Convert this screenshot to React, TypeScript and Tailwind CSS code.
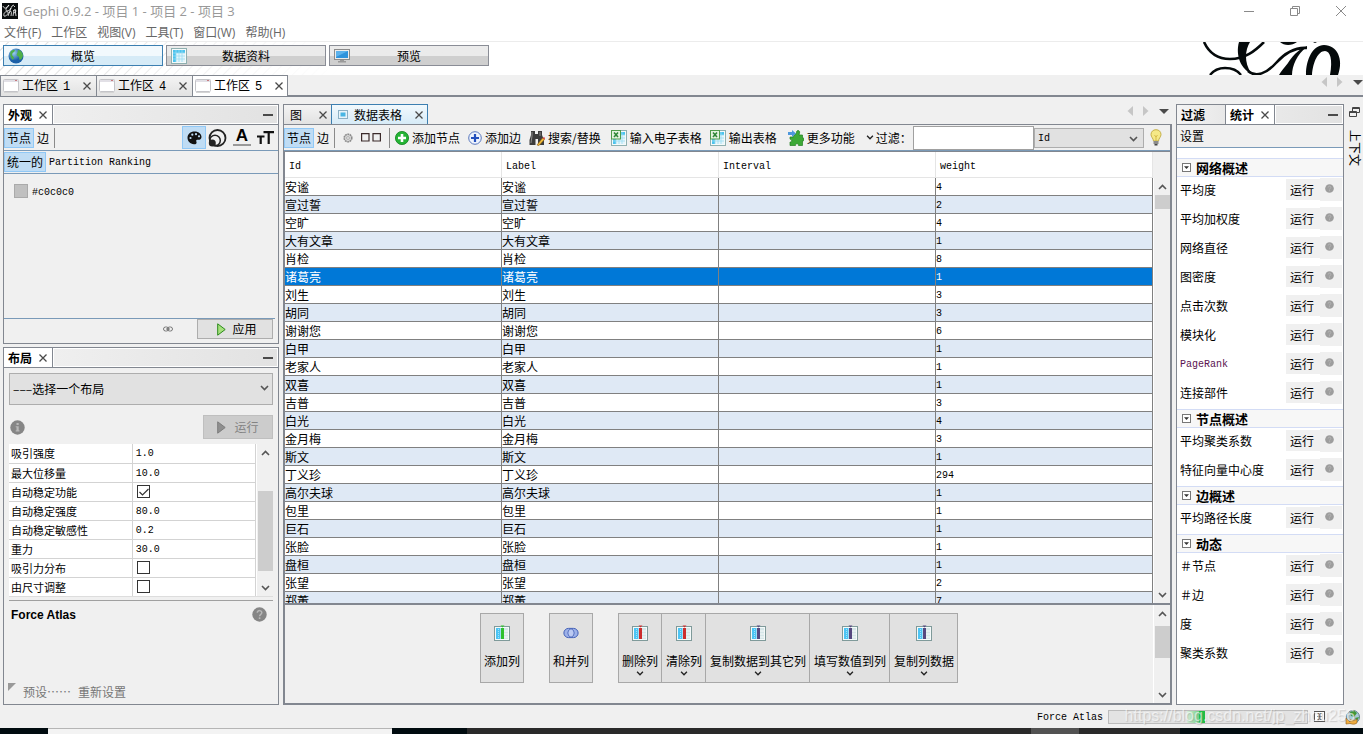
import React from 'react';

type Kids = { children?: React.ReactNode };

const nodes: [string, string][] = [
  ['安谧', '4'], ['宣过誓', '2'], ['空旷', '4'], ['大有文章', '1'], ['肖检', '8'], ['诸葛亮', '1'],
  ['刘生', '3'], ['胡同', '3'], ['谢谢您', '6'], ['白甲', '1'], ['老家人', '1'], ['双喜', '1'],
  ['吉普', '3'], ['白光', '4'], ['金月梅', '3'], ['斯文', '1'], ['丁义珍', '294'], ['高尔夫球', '1'],
  ['包里', '1'], ['巨石', '1'], ['张脸', '1'], ['盘桓', '1'], ['张望', '2'], ['郑董', '7'],
];

const properties: { name: string; value: string | boolean }[] = [
  { name: '吸引强度', value: '1.0' },
  { name: '最大位移量', value: '10.0' },
  { name: '自动稳定功能', value: true },
  { name: '自动稳定强度', value: '80.0' },
  { name: '自动稳定敏感性', value: '0.2' },
  { name: '重力', value: '30.0' },
  { name: '吸引力分布', value: false },
  { name: '由尺寸调整', value: false },
];

const statistics: { title: string; items: string[] }[] = [
  { title: '网络概述', items: ['平均度', '平均加权度', '网络直径', '图密度', '点击次数', '模块化', 'PageRank', '连接部件'] },
  { title: '节点概述', items: ['平均聚类系数', '特征向量中心度'] },
  { title: '边概述', items: ['平均路径长度'] },
  { title: '动态', items: ['＃节点', '＃边', '度', '聚类系数'] },
];

/* ---------- icons ---------- */

const Cross = () => (
  <svg width="8" height="8" viewBox="0 0 8 8" stroke="#4a4a4a" strokeWidth="1.3"><path d="M0.5 0.5L7.5 7.5M7.5 0.5L0.5 7.5" /></svg>
);

const Chevron = ({ up = false, color = '#555', small = false }: { up?: boolean; color?: string; small?: boolean }) => (
  <svg width={small ? 8 : 9} height={small ? 5 : 6} viewBox="0 0 9 6" fill="none" stroke={color} strokeWidth="1.6">
    <path d={up ? 'M1 5L4.5 1.5L8 5' : 'M1 1L4.5 4.5L8 1'} />
  </svg>
);

const GephiMark = () => (
  <svg width="16" height="16" viewBox="0 0 16 16">
    <rect width="16" height="16" fill="#0a0d0e" />
    <g fill="none" stroke="#fff" strokeWidth="0.8">
      <path d="M1 3C2 6 5 6 7 2M7 2C4 4 3 8 5 8C8 8 9 5 10 3L12 2" />
      <path d="M2 13C1 9 5 8 6 9C7 11 3 14 2 13M6 13L9 5M7 10C9 7 10 8 9 13M11 13L12 7M11 8C14 5 15 9 12 10M13 6L14 13M12 4L13 3" />
    </g>
  </svg>
);

const ScriptLogo = () => (
  <svg width="145" height="33" viewBox="0 0 145 33" className="shrink-0">
    <g fill="none" stroke="#050a0b">
      <path d="M4 0C9 11 18 17 30 17C45 17 55 9 64 0" strokeWidth="2.6" />
      <path d="M10 33C14 28 19 26 25 26C32 26 38 29 41 33" strokeWidth="2.4" />
      <path d="M48 29C56 36 67 31 76 21C84 12 94 5 107 6" strokeWidth="2.6" />
    </g>
    <g fill="#050a0b">
      <path d="M39 0H50C45 8 44 20 51 31C42 28 35 14 39 0Z" />
      <path d="M107 4C98 7 91 16 88 21C84 26 81 29 79 33H92C92 24 97 12 107 5Z" />
      <path d="M106 33C106 17 113 3 124 3C137 3 144 17 138 33H130C133 17 130 9 125 9C118 9 113 20 112 33Z" />
      <path d="M80 0C84 4 92 4 97 0ZM113 0H117L115 1Z" />
    </g>
  </svg>
);

const Globe = () => (
  <svg width="16" height="16" viewBox="0 0 16 16">
    <defs><radialGradient id="sea" cx="35%" cy="30%"><stop offset="0" stopColor="#9fd0ee" /><stop offset="1" stopColor="#1c60a8" /></radialGradient></defs>
    <circle cx="8" cy="8" r="7.5" fill="url(#sea)" />
    <path d="M2.5 4C4 2 6 1.5 7 2.5L6 4L4.5 5L4 7L6 9.5L5 12C3 10.5 1.5 7 2.5 4ZM10 2C13 2 15 5 15 8L13.5 11L11.5 12L11 9L8.5 7L9.5 4.5Z" fill="#4fb04a" />
  </svg>
);

const Sheet = ({ excel = false }: { excel?: boolean }) => (
  <svg width="16" height="16" viewBox="0 0 16 16">
    <rect x="0.5" y="0.5" width="15" height="15" fill="#f5fafa" stroke="#8fb0b0" />
    <rect x="2" y="2" width="12" height="12" fill="#4cc4ee" />
    <path d="M5 5H14V14H5Z" fill="#e4f5fb" />
    <path d="M2 5H14M2 8H14M2 11H14M5 2V14M8 2V14M11 2V14" stroke="#9adcf2" strokeWidth="0.8" />
    {excel && <g><rect x="0.5" y="0.5" width="9" height="8.5" fill="#e4f3df" stroke="#4f9c4a" /><path d="M3 2.5L7 7M7 2.5L3 7" stroke="#2e8636" strokeWidth="1.6" /></g>}
  </svg>
);

const Monitor = () => (
  <svg width="16" height="14" viewBox="0 0 16 14">
    <rect x="0.5" y="0.5" width="15" height="10" fill="#ececec" stroke="#8b8b8b" />
    <rect x="2" y="2" width="12" height="7" fill="#2f93dc" /><path d="M2 2H14L2 8Z" fill="#5cb2ec" />
    <path d="M6 11H10V12H12V13.5H4V12H6Z" fill="#9a9a9a" />
  </svg>
);

const WindowIcon = () => (
  <svg width="16" height="14" viewBox="0 0 16 14">
    <rect x="0.5" y="0.5" width="15" height="12" rx="1" fill="#fff" stroke="#c4c4c8" />
    <path d="M1 1H15V3H1Z" fill="#e2e0e6" /><rect x="12" y="1" width="2" height="1" fill="#c77a80" /><path d="M1 13.5H15" stroke="#d4d4d4" />
  </svg>
);

const Palette = () => (
  <svg width="15" height="14" viewBox="0 0 15 14">
    <path d="M7.5 0.5C12 0.5 14.5 3 14.5 6C14.5 8.5 12 9 10.5 8.7C9 8.4 9 10 9.5 11C10 12.5 8.5 13.5 7 13.3C3 13 0.5 10 0.5 6.8C0.5 3 3.5 0.5 7.5 0.5Z" fill="#111" />
    <g fill="#bfdcf4"><circle cx="3.5" cy="7" r="1.1" /><circle cx="5.3" cy="3.7" r="1.1" /><circle cx="9" cy="3.2" r="1.1" /><circle cx="12" cy="5.3" r="1.1" /></g>
  </svg>
);

const Rings = () => (
  <svg width="19" height="18" viewBox="0 0 19 18" fill="none" stroke="#222" strokeWidth="1.8">
    <circle cx="9.5" cy="9" r="8" /><circle cx="7" cy="11.5" r="5.3" strokeWidth="1.5" /><circle cx="4.3" cy="14" r="3.5" fill="#222" stroke="none" />
  </svg>
);

const Play = ({ off = false }: { off?: boolean }) => (
  <svg width="9" height="13" viewBox="0 0 9 13"><path d="M0.7 0.8L8.2 6.5L0.7 12.2Z" fill={off ? '#8f8f8f' : '#a5e07c'} stroke={off ? '#7d7d7d' : '#2c8a1c'} /></svg>
);

const Help = ({ size, mark = '?' }: { size: number; mark?: '?' | 'i' }) => (
  <svg width={size} height={size} viewBox="0 0 15 15">
    <circle cx="7.5" cy="7.5" r="7.2" fill={size < 12 ? '#9d9d9d' : '#868686'} />
    {mark === '?'
      ? <g><path d="M5.3 5.8C5.3 2.8 10 3 9.8 5.8C9.7 7.3 7.6 7.4 7.6 9.2" fill="none" stroke="#b8b8b8" strokeWidth="1.5" /><rect x="6.8" y="10.3" width="1.6" height="1.7" fill="#b8b8b8" /></g>
      : <path d="M6.5 3H8.7V5H6.5ZM5.7 6.2H8.7V10.3H9.5V11.5H5.7V10.3H6.5V7.3H5.7Z" fill="#b8b8b8" />}
  </svg>
);

const Gear = () => (
  <svg width="10" height="10" viewBox="0 0 10 10"><circle cx="5" cy="5" r="3.8" fill="#d6d6d6" stroke="#8b8b8b" strokeDasharray="1.8 0.6" strokeWidth="1.6" /><circle cx="5" cy="5" r="1.4" fill="#eee" stroke="#999" strokeWidth="0.7" /></svg>
);

const AddGreen = () => (
  <svg width="14" height="14" viewBox="0 0 14 14"><circle cx="7" cy="7" r="6.6" fill="#25b335" stroke="#118420" strokeWidth="0.8" /><path d="M7 3V11M3 7H11" stroke="#fff" strokeWidth="2.6" /></svg>
);

const AddBlue = () => (
  <svg width="14" height="14" viewBox="0 0 14 14"><circle cx="7" cy="7" r="6.3" fill="#eef3fd" stroke="#5a78bd" /><path d="M7 3V11M3 7H11" stroke="#2450bd" strokeWidth="2.2" /></svg>
);

const Binoculars = () => (
  <svg width="16" height="16" viewBox="0 0 16 16">
    <path d="M2 1H6V4H9V1H13V5L15 10V15H9V9H6.5V15H0.5V10L2 5Z" fill="#3c3c3c" /><path d="M3 2V6L2 13M11 2V6" stroke="#8d8d8d" fill="none" />
    <path d="M8 15L13.5 8L15.5 9.5L10 15.5Z" fill="#f1bd3a" stroke="#8b5a12" strokeWidth="0.6" /><path d="M13.5 8L15.5 9.5L16 8L15 7Z" fill="#d94040" />
  </svg>
);

const Puzzle = () => (
  <svg width="16" height="16" viewBox="0 0 16 16">
    <path d="M2 7H5.5C4.5 5 9 4 8.5 2C9 -0.5 12.5 0.5 11.5 3L11 5H14.5V8C17 7.5 16.5 11.5 14.5 11V15.5H10.5C11 13 7 13 7.5 15.5H2V12C3 12 4.5 11.5 3.5 10C3 9.2 2 9.5 2 9Z" fill="#3da936" stroke="#217f1f" strokeWidth="0.7" />
    <path d="M0 2H4V0L8 3.5L4 7V5H0Z" fill="#4d97dc" />
  </svg>
);

const Bulb = () => (
  <svg width="12" height="17" viewBox="0 0 12 17">
    <path d="M6 0.7C9 0.7 11 2.8 11 5.5C11 8 8.7 9.3 8.5 12H3.5C3.3 9.3 1 8 1 5.5C1 2.8 3 0.7 6 0.7Z" fill="#f5e987" stroke="#c5b04a" />
    <path d="M4.5 6L6 8L7.5 6M6 8V12" stroke="#cdae38" fill="none" strokeWidth="0.8" /><rect x="3.5" y="12" width="5" height="3" fill="#8b8b8b" /><rect x="4.5" y="15" width="3" height="1.5" fill="#444" />
  </svg>
);

const ColumnIcon = ({ bar }: { bar: string }) => (
  <svg width="16" height="16" viewBox="0 0 16 16">
    <rect x="0.5" y="1.5" width="15" height="14" fill="#f5fafa" stroke="#7f9a9a" />
    <rect x="2" y="3" width="4.5" height="11" fill="#4cc4f4" /><rect x="10" y="3" width="4" height="11" fill="#d5e6e8" />
    <path d="M10 6H14M10 9H14M10 12H14" stroke="#fff" strokeWidth="0.8" /><path d="M4.5 4V13" stroke="#a5e2f8" strokeDasharray="1 1" />
    <rect x="7" y="3" width="3" height="11" fill={bar} /><path d="M6.5 0.5H10.5L8.5 2.5Z" fill={bar} />
  </svg>
);

const MergeIcon = () => (
  <svg width="16" height="12" viewBox="0 0 18 12" fill="#9db1e8" stroke="#3f5db5" strokeWidth="1.1">
    <rect x="1" y="0.8" width="16" height="10.4" rx="5.2" /><path d="M9 1.2A5 5 0 0 1 9 10.8A5 5 0 0 1 9 1.2" fill="#bccaf2" strokeWidth="0.9" />
  </svg>
);

const NavArrows = () => (
  <div className="flex items-center gap-2.5">
    <svg width="6" height="10" viewBox="0 0 6 10"><path d="M6 0V10L0.5 5Z" fill="#c6c6c6" /></svg>
    <svg width="6" height="10" viewBox="0 0 6 10"><path d="M0 0V10L5.5 5Z" fill="#c6c6c6" /></svg>
    <svg width="10" height="5" viewBox="0 0 10 5"><path d="M0 0H10L5 5Z" fill="#4a4a4a" /></svg>
  </div>
);

/* ---------- shared parts ---------- */

const latin = "block pt-0.5 font-['Liberation_Mono',monospace] text-[10px] leading-[14px]";

const Toggle = ({ children, on = false }: Kids & { on?: boolean }) => (
  <button aria-pressed={on} className={on ? 'h-5 shrink-0 whitespace-nowrap border border-[#90c8f6] bg-[#bfdcf4] px-0.5' : 'h-5 shrink-0 whitespace-nowrap px-[3px]'}>{children}</button>
);

const Divider = () => <span className="mx-0.5 h-5 w-px shrink-0 bg-[#8a8a8a]" />;

const PanelHeader = ({ children }: Kids) => (
  <div className="flex h-5 shrink-0 border-b border-[#828790] bg-linear-to-r from-[#f2f2f2] to-[#e2e2e2]">
    {children}
    <div className="flex flex-1 items-center justify-end border border-white pr-1"><span className="h-0.5 w-2.5 bg-[#4a4a4a]" /></div>
  </div>
);

const PanelTab = ({ children }: Kids) => (
  <div className="flex w-[49px] items-center justify-between border-r border-[#828790] bg-white pr-[5px] pl-1 font-bold">
    {children}<button aria-label="关闭"><Cross /></button>
  </div>
);

const Scrollbar = ({ thumb }: { thumb: string }) => (
  <div className="flex w-[17px] shrink-0 flex-col items-center border-l border-white bg-[#f0f0f0]">
    <div className="flex h-[17px] shrink-0 items-center"><Chevron up /></div>
    <div className="flex min-h-0 w-[15px] flex-1 flex-col"><div className={thumb} /></div>
    <div className="flex h-[17px] shrink-0 items-center"><Chevron /></div>
  </div>
);

const ToolButton = ({ icon, children }: Kids & { icon: React.ReactNode }) => (
  <button className="flex shrink-0 items-center gap-[3px] whitespace-nowrap">{icon}{children}</button>
);

/* ---------- header ---------- */

const TitleBar = () => (
  <header className="bg-white font-['Open_Sans','Noto_Sans_CJK_SC',sans-serif]">
    <div className="flex h-[22px] items-center pl-0.5 text-[#999]">
      <GephiMark />
      <h1 className="ml-[5px] flex-1 text-[13px]">Gephi 0.9.2 - 项目 1 - 项目 2 - 项目 3</h1>
      <div className="flex items-center gap-9 pr-[17px]">
        <button aria-label="最小化"><svg width="10" height="10" viewBox="0 0 10 10"><path d="M0 5.5H10" stroke="#8a8a8a" /></svg></button>
        <button aria-label="还原"><svg width="10" height="10" viewBox="0 0 10 10" fill="none" stroke="#8a8a8a"><path d="M0.5 2.5H7.5V9.5H0.5ZM2.5 2.5V0.5H9.5V7.5H7.5" /></svg></button>
        <button aria-label="关闭窗口"><svg width="10" height="10" viewBox="0 0 10 10" stroke="#8a8a8a"><path d="M0 0L10 10M10 0L0 10" /></svg></button>
      </div>
    </div>
    <nav className="flex h-5 items-center gap-2.5 border-b border-[#ececec] pt-[3px] pl-1 text-[#666]">
      {['文件(F)', '工作区', '视图(V)', '工具(T)', '窗口(W)', '帮助(H)'].map((m) => <button key={m}>{m}</button>)}
    </nav>
  </header>
);

const Perspective = ({ icon, label, on = false }: { icon: React.ReactNode; label: string; on?: boolean }) => (
  <button className={on
    ? 'flex h-[21px] w-40 items-center border border-[#3c7fb1] bg-linear-to-b from-[#f2f9fd] from-50% to-[#d6ebf7] to-50% pr-5 pl-1'
    : 'flex h-[21px] w-40 items-center border border-[#8a8d96] bg-linear-to-b from-[#ebebeb] from-50% to-[#cfcfcf] to-50% pr-5 pl-1'}>
    {icon}<span className="flex-1">{label}</span>
  </button>
);

const PerspectiveBar = () => (
  <div className="flex h-[33px] justify-between overflow-hidden bg-white bg-[linear-gradient(to_right,rgba(255,255,255,0),#fff_340px),repeating-linear-gradient(135deg,#fff_0px,#fff_5px,#dcdcdc_6px,#fff_7px)]">
    <div className="flex gap-[3px] pt-[3px] pl-[3px]">
      <Perspective on icon={<Globe />} label="概览" />
      <Perspective icon={<Sheet />} label="数据资料" />
      <Perspective icon={<Monitor />} label="预览" />
    </div>
    <div className="pr-[18px]"><ScriptLogo /></div>
  </div>
);

const WorkspaceTabs = () => (
  <div className="flex h-[22px] justify-between border-b-2 border-[#828790]">
    <div className="flex">
      {['1', '4', '5'].map((n) => (
        <div key={n} className={n === '5'
          ? 'flex h-[21px] w-24 items-center border border-b-0 border-[#828790] bg-white pr-1 pl-0.5'
          : 'flex h-[21px] w-24 items-center border-t border-l border-[#828790] bg-linear-to-b from-[#f4f4f4] to-[#e2e2e2] pr-[5px] pl-0.5'}>
          <WindowIcon />
          <span className="ml-[3px] flex-1 whitespace-nowrap">工作区<span className="ml-[5px] font-['Liberation_Mono',monospace]">{n}</span></span>
          <button aria-label="关闭"><Cross /></button>
        </div>
      ))}
    </div>
    <div className="flex h-3.5 items-center"><NavArrows /></div>
  </div>
);

/* ---------- left column ---------- */

const Appearance = () => (
  <section className="flex h-60 shrink-0 flex-col border border-[#828790]">
    <PanelHeader><PanelTab>外观</PanelTab></PanelHeader>
    <div className="flex h-[26px] shrink-0 items-center border-b border-[#7a9ab8]">
      <Toggle on>节点</Toggle><Toggle>边</Toggle><Divider />
      <div className="flex flex-1 items-center justify-end gap-0.5 pr-1">
        <button aria-label="颜色" className="flex h-[23px] w-6 items-center justify-center border border-[#90c8f6] bg-[#bfdcf4]"><Palette /></button>
        <button aria-label="大小"><Rings /></button>
        <button aria-label="标签颜色" className="h-[18px] w-[26px] px-1 font-['Liberation_Sans',sans-serif]"><span className="block h-[17px] border-b-2 border-[#999] text-[17px] leading-[14px] font-bold">A</span></button>
        <button aria-label="标签大小">
          <svg width="17" height="13" viewBox="0 0 17 13" stroke="#111" strokeWidth="2.2"><path d="M6.5 1.2H17M11.7 1.2V13M0 5.5H7.5M3.7 5.5V13" /></svg>
        </button>
      </div>
    </div>
    <div className="flex h-[23px] shrink-0 items-center border-b border-[#7a9ab8]">
      <Toggle on>统一的</Toggle>
      <button className="px-[3px]"><span className={latin}>Partition</span></button>
      <button className="px-[3px]"><span className={latin}>Ranking</span></button>
    </div>
    <div className="flex flex-1 items-start gap-1 pt-2.5 pl-2.5">
      <span className="size-3.5 border border-[#aaa] bg-[#c0c0c0]" /><span className={latin}>#c0c0c0</span>
    </div>
    <div className="mr-[3px] flex h-[25px] shrink-0 items-center justify-end gap-6 border-t border-[#7a9ab8] pr-0.5 pb-1">
      <svg width="10" height="6" viewBox="0 0 10 6" fill="none" stroke="#777"><rect x="0.5" y="1" width="5" height="4" rx="2" /><rect x="4.5" y="1" width="5" height="4" rx="2" /><path d="M3 3H7" /></svg>
      <button className="flex h-5 w-[76px] items-center justify-center gap-1.5 border border-[#adadad] bg-[#e1e1e1] pl-1"><Play />应用</button>
    </div>
  </section>
);

const LayoutPanel = () => (
  <section className="flex min-h-0 flex-1 flex-col border border-[#828790]">
    <PanelHeader><PanelTab>布局</PanelTab></PanelHeader>
    <div className="relative mx-[5px] mt-[5px] shrink-0">
      <select aria-label="布局" className="block h-8 w-full appearance-none border border-[#adadad] bg-[#e1e1e1] pl-[3px]"><option>–––选择一个布局</option></select>
      <span className="pointer-events-none absolute top-3 right-1"><Chevron /></span>
    </div>
    <div className="mt-2.5 flex h-6 shrink-0 items-center justify-between pr-[5px] pl-1.5">
      <Help size={15} mark="i" />
      <button disabled className="flex h-6 w-[70px] items-center justify-center gap-2 border border-[#bfbfbf] bg-[#ccc] text-[#838383]"><Play off />运行</button>
    </div>
    <div className="mx-[5px] mt-[5px] flex h-[153px] shrink-0 overflow-hidden border-b border-[#ddd]">
      <table className="w-full table-fixed border-collapse self-start bg-white text-[11px]">
        <tbody>
          {properties.map((p) => (
            <tr key={p.name} className="h-[19px] border-b border-[#d3d3d3]">
              <th scope="row" className="border-r border-[#d3d3d3] p-0 pl-0.5 text-left font-normal">{p.name}</th>
              <td className="border-r border-[#d3d3d3] p-0 pl-[3px]">
                {typeof p.value === 'string' ? <span className={latin}>{p.value}</span> : (
                  <span className="relative flex items-center">
                    <input type="checkbox" aria-label={p.name} defaultChecked={p.value} className="ml-px size-[13px] appearance-none border border-[#333] bg-white" />
                    {p.value && <svg className="pointer-events-none absolute left-[3px]" width="10" height="8" viewBox="0 0 10 8" fill="none" stroke="#333" strokeWidth="1.2"><path d="M0.5 4L3.5 7L9.5 1" /></svg>}
                  </span>
                )}
              </td>
            </tr>
          ))}
        </tbody>
      </table>
      <Scrollbar thumb="mt-[30px] h-20 bg-[#cdcdcd]" />
    </div>
    <div className="mx-[5px] mt-[3px] flex h-7 shrink-0 items-center justify-between border-t border-[#a0a0a0] pr-1.5 pl-0.5 font-['Liberation_Sans',sans-serif] font-bold">
      <h2>Force Atlas</h2><Help size={15} />
    </div>
    <div className="flex flex-1 items-end gap-[7px] pb-1 pl-1 text-[#777]">
      <svg width="8" height="8" viewBox="0 0 8 8" className="mb-[9px]"><path d="M0 0H8L0 8Z" fill="#999" /></svg>
      <button className="whitespace-nowrap">预设……</button><button>重新设置</button>
    </div>
  </section>
);

/* ---------- centre ---------- */

const DataToolbar = () => (
  <div className="flex h-[26px] shrink-0 items-center border-b border-[#7a9ab8] pr-1">
    <Toggle on>节点</Toggle><Toggle>边</Toggle><Divider />
    <div className="flex items-center gap-2 px-1.5">
      <button aria-label="设置"><Gear /></button>
      <button aria-label="显示"><svg width="20" height="9" viewBox="0 0 20 9" fill="none" stroke="#3b2a2a" strokeWidth="1.2"><path d="M0.6 0.6H8V8H0.6ZM12 0.6H19.4V8H12Z" /></svg></button>
    </div>
    <Divider />
    <div className="flex items-center gap-2 pr-1.5 pl-[3px]">
      <ToolButton icon={<AddGreen />}>添加节点</ToolButton>
      <ToolButton icon={<AddBlue />}>添加边</ToolButton>
      <ToolButton icon={<Binoculars />}><span className="pr-0.5">搜索/替换</span></ToolButton>
      <ToolButton icon={<Sheet excel />}>输入电子表格</ToolButton>
      <ToolButton icon={<Sheet excel />}>输出表格</ToolButton>
      <div className="ml-[3px] flex"><ToolButton icon={<Puzzle />}><span className="mr-2">更多功能</span><Chevron small color="#222" /></ToolButton></div>
    </div>
    <label htmlFor="filter" className="-ml-1 shrink-0 pr-px">过滤：</label>
    <input id="filter" className="h-6 min-w-0 flex-1 border border-[#a0a0a0] bg-white px-1" />
    <div className="relative shrink-0">
      <select aria-label="过滤列" className="block h-5 w-[110px] appearance-none border border-[#adadad] bg-[#e1e1e1] pt-0.5 pl-[3px] font-['Liberation_Mono',monospace] text-[10px]"><option>Id</option></select>
      <span className="pointer-events-none absolute top-2 right-1.5"><Chevron /></span>
    </div>
    <button aria-label="提示" className="mr-1 ml-1.5"><Bulb /></button>
  </div>
);

const cell = 'overflow-hidden border-r border-b border-[#808080] p-0 whitespace-nowrap';

const NodeTable = () => (
  <div className="flex min-h-0 flex-1 border-t border-l border-[#828790]">
    <div className="min-w-0 flex-1 overflow-hidden">
      <table className="w-full table-fixed border-separate border-spacing-0">
        <thead>
          <tr className="h-[26px] bg-white">
            {['Id', 'Label', 'Interval', 'weight'].map((h) => (
              <th key={h} scope="col" className="border-r border-b border-[#e5e5e5] p-0 pt-0.5 pl-1 text-left font-normal"><span className={latin}>{h}</span></th>
            ))}
          </tr>
        </thead>
        <tbody>
          {nodes.map(([name, weight], i) => (
            <tr key={name} className={name === '诸葛亮' ? 'h-[18px] bg-[#0078d7] text-white' : i % 2 ? 'h-[18px] bg-[#dfe9f5]' : 'h-[18px] bg-white'}>
              <td className={cell}>{name}</td><td className={cell}>{name}</td><td className={cell} />
              <td className={cell}><span className={latin}>{weight}</span></td>
            </tr>
          ))}
        </tbody>
      </table>
    </div>
    <div className="flex shrink-0 pt-[26px]"><Scrollbar thumb="h-3.5 bg-[#cdcdcd]" /></div>
  </div>
);

const ColumnButton = ({ icon, label, menu = false }: { icon: React.ReactNode; label: string; menu?: boolean }) => (
  <button className="flex h-[70px] flex-col items-center border-y border-r border-[#a8a8a8] bg-[#e1e1e1] pt-[11px] pr-[3px] pl-1 whitespace-nowrap first:border-l first:pl-[3px]">
    <span className="flex h-4 items-center">{icon}</span>
    <span className="mt-3 h-[18px] leading-4">{label}</span>
    {menu && <Chevron small color="#222" />}
  </button>
);

const ColumnActions = () => (
  <div className="flex h-[100px] shrink-0 border-t-2 border-l border-[#828790]">
    <div className="flex flex-1 justify-center gap-[25px] overflow-hidden pt-2">
      <div><ColumnButton icon={<ColumnIcon bar="#2fc02f" />} label="添加列" /></div>
      <div><ColumnButton icon={<MergeIcon />} label="和并列" /></div>
      <div className="flex items-start">
        <ColumnButton menu icon={<ColumnIcon bar="#cc2e2e" />} label="删除列" />
        <ColumnButton menu icon={<ColumnIcon bar="#cc2e2e" />} label="清除列" />
        <ColumnButton menu icon={<ColumnIcon bar="#55487f" />} label="复制数据到其它列" />
        <ColumnButton menu icon={<ColumnIcon bar="#55487f" />} label="填写数值到列" />
        <ColumnButton menu icon={<ColumnIcon bar="#55487f" />} label="复制列数据" />
      </div>
    </div>
    <Scrollbar thumb="mt-1 h-8 bg-[#cdcdcd]" />
  </div>
);

const DataLab = () => (
  <main className="flex min-w-0 flex-1 flex-col">
    <div className="flex h-5 shrink-0 justify-between">
      <div className="flex">
        <div className="flex w-12 items-center justify-between border-t border-l border-[#828790] bg-linear-to-b from-[#f4f4f4] to-[#e2e2e2] pr-1 pl-1.5">图<button aria-label="关闭"><Cross /></button></div>
        <div className="flex w-[97px] items-center border border-b-0 border-[#3c7fb1] bg-linear-to-b from-[#f2f9fd] to-[#d6ebf7] pr-1 pl-1.5">
          <svg width="10" height="9" viewBox="0 0 10 9"><rect x="0.5" y="0.5" width="9" height="8" fill="#e8f4fa" stroke="#8cb0c4" /><rect x="2.5" y="2.5" width="5" height="4" fill="#49b6e4" /></svg>
          <span className="ml-1.5 flex-1">数据表格</span><button aria-label="关闭"><Cross /></button>
        </div>
      </div>
      <div className="flex items-center pr-[3px] pb-1.5"><NavArrows /></div>
    </div>
    <div className="flex min-h-0 flex-1 flex-col border border-r-2 border-b-2 border-[#828790]">
      <DataToolbar />
      <NodeTable />
      <ColumnActions />
    </div>
  </main>
);

/* ---------- right column ---------- */

const Statistics = () => (
  <aside className="flex w-[168px] shrink-0 flex-col border border-[#828790] bg-white">
    <PanelHeader>
      <div className="flex w-[49px] items-center border-r border-[#828790] bg-linear-to-r from-[#f4f4f4] to-[#e8e8e8] pl-1 font-bold">过滤</div>
      <PanelTab>统计</PanelTab>
    </PanelHeader>
    <div className="flex h-[23px] shrink-0 items-center border-b border-[#7a9ab8] bg-[#f0f0f0] pl-[3px]"><button>设置</button></div>
    <div className="min-h-0 flex-1 overflow-hidden pt-2.5">
      {statistics.map((group) => (
        <section key={group.title}>
          <h2 className="flex h-[19px] items-center gap-[5px] border-y border-[#d3dcf5] bg-[#f7f7f7] pl-[5px] text-[13px] font-bold">
            <svg width="9" height="9" viewBox="0 0 9 9"><rect x="0.5" y="0.5" width="8" height="8" fill="#fff" stroke="#777" /><path d="M2 3.2H7L4.5 6Z" fill="#333" /></svg>
            {group.title}
          </h2>
          {group.items.map((item) => (
            <div key={item} className="flex h-[29px] items-center pr-px pb-1 pl-[3px]">
              <span className="flex-1">{item === 'PageRank' ? <span className={`${latin} text-[#5a1450]`}>{item}</span> : item}</span>
              <button className="h-[21px] bg-[#f0f0f0] pr-1.5 pl-1">运行</button>
              <button aria-label={`${item} 帮助`} className="flex h-[23px] w-[22px] items-center justify-center bg-[#f0f0f0] pr-1 pb-0.5"><Help size={9} /></button>
            </div>
          ))}
        </section>
      ))}
    </div>
  </aside>
);

const SideStrip = () => (
  <div className="flex w-[19px] shrink-0 flex-col items-center gap-3 pt-[3px] pl-0.5">
    <button aria-label="还原"><svg width="11" height="11" viewBox="0 0 11 11" fill="none" stroke="#444"><path d="M3.5 0.5H10.5V5.5H3.5ZM3.5 1.5H10.5M0.5 4.5H7.5V9.5H0.5ZM0.5 5.5H7.5" /></svg></button>
    <button className="[text-orientation:sideways] [writing-mode:vertical-rl]">上下文</button>
  </div>
);

/* ---------- footer ---------- */

const StatusBar = () => (
  <footer className="relative flex h-[23px] shrink-0 items-center justify-end pr-[3px]">
    <span className={`${latin} mr-[5px]`}>Force Atlas</span>
    <div className="flex h-3.5 w-[200px] border border-[#bcbcbc] bg-[#e3e3e3] pl-[78px]">
      <span className="w-3 bg-linear-to-r from-[#d5ecd8] to-[#6fcf85]" /><span className="w-1.5 bg-[#1fbf44]" />
    </div>
    <svg width="11" height="11" viewBox="0 0 11 11" className="ml-1.5" fill="none" stroke="#555"><rect x="0.5" y="0.5" width="10" height="10" fill="#fff" /><path d="M3 2.5H5V8.5H3M8 2.5H6V8.5H8M3 5.5H8" /></svg>
    <svg width="15" height="16" viewBox="0 0 15 16" className="ml-5"><circle cx="8" cy="8" r="6.5" fill="#a9cbd8" stroke="#648290" /><path d="M5 3L9 1.5L12 4L9 8L6 7ZM10 9L14 8L12 12Z" fill="#3f9938" /><path d="M1 9L5 13V10.5C8 11 9 12 12 10V14C9 16 7 15 5 14.5L1 15Z" fill="#f1ad3d" stroke="#8b5c18" strokeWidth="0.6" /></svg>
    <span className="absolute right-2 bottom-[3px] font-['Liberation_Sans',sans-serif] text-base leading-[18px] text-white/60 [text-shadow:1px_1px_1px_rgba(120,120,120,0.3)]">https://blog.csdn.net/jp_zhou256</span>
  </footer>
);

const Taskbar = () => (
  <div className="flex h-1.5 shrink-0 bg-[#000b0f]">
    <span className="w-12" /><span className="w-[344px] border-t border-[#b5b5b5] bg-[#f3f3f3]" /><span className="w-[75px]" />
    <span className="flex-1 bg-[#2a2a2a]" /><span className="w-12 bg-[#525252]" /><span className="w-[101px] bg-[#2a2a2a]" /><span className="w-[183px]" />
  </div>
);

export default function App() {
  return (
    <div className="flex h-screen flex-col overflow-hidden bg-[#f0f0f0] font-['Noto_Sans_CJK_SC',sans-serif] text-xs leading-4 text-black">
      <TitleBar />
      <PerspectiveBar />
      <WorkspaceTabs />
      <div className="flex min-h-0 flex-1 pt-[7px] pl-[3px]">
        <div className="mr-1 flex w-[276px] shrink-0 flex-col gap-[3px]">
          <Appearance />
          <LayoutPanel />
        </div>
        <DataLab />
        <div className="ml-1 flex"><Statistics /><SideStrip /></div>
      </div>
      <StatusBar />
      <Taskbar />
    </div>
  );
}
